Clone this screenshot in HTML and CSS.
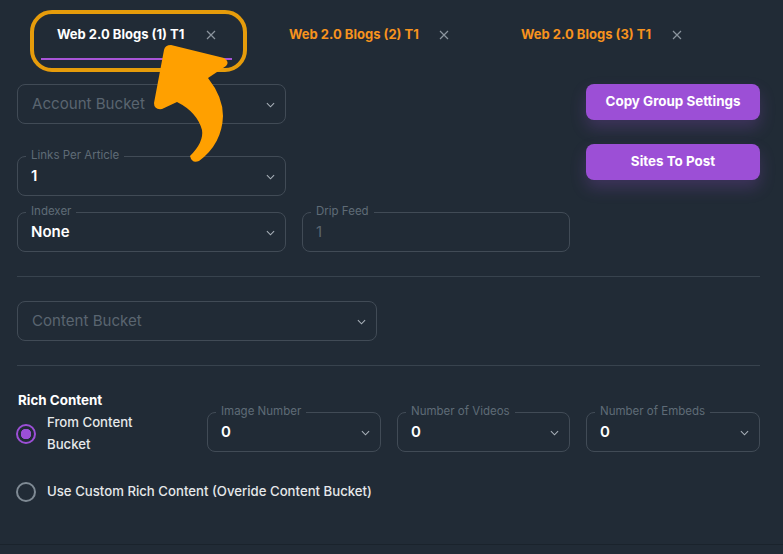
FILE: index.html
```html
<!DOCTYPE html>
<html lang="en">
<head>
<meta charset="utf-8">
<title>Web 2.0 Blogs</title>
<link rel="stylesheet" href="styles.css">
</head>
<body>
<div class="page">
  <nav class="tabs">
    <div class="tab tab-active"><span class="tab-label">Web 2.0 Blogs (1) T1</span><svg class="tab-close" viewBox="0 0 10 10"><path d="M1 1l8 8M9 1l-8 8"/></svg></div>
    <div class="tab"><span class="tab-label">Web 2.0 Blogs (2) T1</span><svg class="tab-close" viewBox="0 0 10 10"><path d="M1 1l8 8M9 1l-8 8"/></svg></div>
    <div class="tab"><span class="tab-label">Web 2.0 Blogs (3) T1</span><svg class="tab-close" viewBox="0 0 10 10"><path d="M1 1l8 8M9 1l-8 8"/></svg></div>
  </nav>

  <section class="top-grid">
    <div class="field field-account"><span class="placeholder">Account Bucket</span><svg class="chev" viewBox="0 0 10 6"><path d="M1 1l4 4 4-4"/></svg></div>
    <div class="actions">
      <button class="btn">Copy Group Settings</button>
      <button class="btn">Sites To Post</button>
    </div>
    <div class="field field-links"><span class="legend">Links Per Article</span><span class="value">1</span><svg class="chev" viewBox="0 0 10 6"><path d="M1 1l4 4 4-4"/></svg></div>
    <div class="field field-indexer"><span class="legend">Indexer</span><span class="value">None</span><svg class="chev" viewBox="0 0 10 6"><path d="M1 1l4 4 4-4"/></svg></div>
    <div class="field field-drip"><span class="legend">Drip Feed</span><span class="value value-muted">1</span></div>
  </section>

  <hr class="rule rule-first">

  <div class="field field-content"><span class="placeholder">Content Bucket</span><svg class="chev" viewBox="0 0 10 6"><path d="M1 1l4 4 4-4"/></svg></div>

  <hr class="rule rule-second">

  <section class="rich">
    <h2 class="rich-title">Rich Content</h2>
    <div class="rich-row">
      <label class="radio radio-first"><span class="dot dot-on"></span><span class="radio-text">From Content Bucket</span></label>
      <div class="field field-num"><span class="legend">Image Number</span><span class="value">0</span><svg class="chev" viewBox="0 0 10 6"><path d="M1 1l4 4 4-4"/></svg></div>
      <div class="field field-num"><span class="legend">Number of Videos</span><span class="value">0</span><svg class="chev" viewBox="0 0 10 6"><path d="M1 1l4 4 4-4"/></svg></div>
      <div class="field field-num"><span class="legend">Number of Embeds</span><span class="value">0</span><svg class="chev" viewBox="0 0 10 6"><path d="M1 1l4 4 4-4"/></svg></div>
    </div>
    <label class="radio radio-second"><span class="dot"></span><span class="radio-text">Use Custom Rich Content (Overide Content Bucket)</span></label>
  </section>
</div>
<div class="foot-line"></div>

<div class="callout-box"></div>
<svg class="callout-arrow" viewBox="0 0 783 554"><path d="M171 45L224 58Q230 62 226 66L208 78Q223 97 223 116Q222 144 199 161Q192 164 190 156Q204 142 202 130Q197 112 177 102L162 109Q154 110 154 103L164 50Q165 45 171 45Z"/></svg>
</body>
</html>
```
FILE: styles.css
```css
* { box-sizing: border-box; }
html, body { margin: 0; height: 100%; }
body {
  background: #212b36;
  font-family: Inter, "Open Sans", sans-serif;
  color: #fff;
  overflow: hidden;
  position: relative;
}
.page { padding: 0 23px 0 17px; }

.tabs { display: flex; gap: 41px; padding: 10px 0 0 24px; height: 60px; }
.tab { width: 191px; height: 50px; padding: 14px 16px 0; display: flex; align-items: flex-start; justify-content: space-between; }
.tab-active { border-bottom: 2px solid #a855d8; }
.tab-label { font-size: 13px; font-weight: 700; line-height: 20px; color: #f7931e; white-space: nowrap; }
.tab-active .tab-label { color: #fff; }
.tab-close { width: 10px; height: 10px; margin-top: 6px; fill: none; stroke: #8b949e; stroke-width: 1.2; }
.tab + .tab .tab-close { margin-right: -1px; }
.tab + .tab + .tab .tab-close { margin-right: -2px; }

.top-grid {
  display: grid;
  grid-template-columns: 269px 268px 174px;
  grid-template-rows: 40px 56px 40px;
  gap: 16px;
  margin-top: 24px;
}
.field {
  position: relative;
  height: 40px;
  border: 1px solid #414b56;
  border-radius: 8px;
  display: flex;
  align-items: center;
  padding: 0 13px;
}
.field-account { grid-column: 1; grid-row: 1; }
.field-links { grid-column: 1; grid-row: 2; margin-top: 16px; }
.field-indexer { grid-column: 1; grid-row: 3; }
.field-drip { grid-column: 2; grid-row: 3; }

.actions { grid-column: 3; grid-row: 1 / span 3; display: flex; flex-direction: column; gap: 24px; }
.btn {
  height: 36px;
  padding: 0 0 1px;
  border: 0;
  border-radius: 8px;
  background: #9c4fd6;
  color: #fff;
  font: 700 13.4px/1 Inter, sans-serif;
  box-shadow: 0 8px 16px rgba(156, 79, 214, 0.24);
}

.placeholder { font-size: 15.1px; line-height: 20px; padding: 0 0 1px 1px; color: #5a6570; }
.value { font-size: 15px; font-weight: 600; line-height: 20px; }
.value-muted { color: #5a6570; font-weight: 400; }
.legend {
  position: absolute;
  top: -10px;
  left: 8px;
  padding: 0 5px;
  background: #212b36;
  font-size: 11.5px;
  line-height: 16px;
  color: #5f6b76;
}
.chev { position: absolute; right: 10px; top: 17px; width: 9px; height: 6px; fill: none; stroke: #a9b1b9; stroke-width: 1.2; }

.rule { border: 0; height: 1px; background: #38434e; margin: 0; }
.rule-first { margin-top: 24px; }
.field-content { width: 360px; margin-top: 24px; }
.rule-second { margin-top: 24px; }

.rich { margin-top: 25px; }
.rich-title { margin: 0 0 0 1px; font-size: 13.4px; line-height: 18px; font-weight: 700; }
.rich-row { display: grid; grid-template-columns: 174px 174px 173px 174px; column-gap: 16px; margin-top: 2px; align-items: start; }
.field-num { margin-top: 1px; }
.radio { display: flex; align-items: center; font-size: 13.2px; line-height: 22px; font-weight: 500; color: #e6e8ea; }
.radio-first { width: 150px; }
.radio-second { margin-top: 25px; }
.dot { flex: none; width: 20px; height: 20px; margin: 1px 11px 0 -1px; border-radius: 50%; border: 2px solid #7f8a94; }
.dot-on { border-color: #9c4fd6; background: radial-gradient(circle, #9c4fd6 0 5px, transparent 5.5px); }

.foot-line { position: absolute; left: 0; right: 0; top: 544px; height: 1px; background: #1a232c; }
.callout-box { position: absolute; left: 30px; top: 10px; width: 217px; height: 62px; border: 4px solid #e69c0b; border-radius: 22px; }
.callout-arrow { position: absolute; left: 0; top: 0; width: 783px; height: 554px; pointer-events: none; fill: #ffa000; }
```
